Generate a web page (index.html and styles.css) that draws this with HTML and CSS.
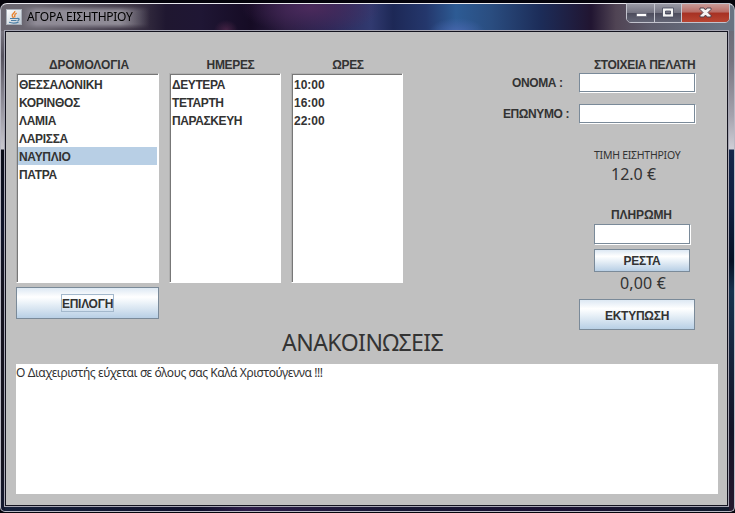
FILE: index.html
```
<!DOCTYPE html>
<html lang="el">
<head>
<meta charset="utf-8">
<title>ΑΓΟΡΑ ΕΙΣΗΤΗΡΙΟΥ</title>
<link rel="stylesheet" href="styles.css">
</head>
<body>
<div class="window">
  <header class="titlebar">
    <svg class="java" viewBox="0 0 16 16" width="16" height="16">
      <defs><linearGradient id="tile" x2="1" y2="1"><stop stop-color="#fff"/><stop offset="1" stop-color="#bdc8d2"/></linearGradient></defs>
      <rect x=".5" y=".5" width="15" height="15" fill="url(#tile)" stroke="#a9b0ba"/>
      <path d="M8.8 2C9.5 4 5 5 6.3 7.2L7.5 9M10.7 4.2C7.5 5.6 9.2 6.5 8.6 8.5" fill="none" stroke="#e8822e" stroke-width="1.4"/>
      <path d="M4 9.5h7.5M5 11.5h5.5M11 9.5c3-.5 2.5 2 .5 2.3M3 13.3c3 .9 7 .8 9.5-.2" fill="none" stroke="#4d7fa5" stroke-width="1.2"/>
    </svg>
    <span class="title">ΑΓΟΡΑ ΕΙΣΗΤΗΡΙΟΥ</span>
    <div class="controls">
      <span class="ctl min"><svg width="28" height="18"><rect x="9.500" y="9.500" width="10" height="3" fill="#fff" stroke="#555868" stroke-width=".6"/></svg></span>
      <span class="ctl max"><svg width="26" height="18"><path d="M7.500 4h11v9h-11zM10.500 7v3h5V7z" fill="#f4f4f4" fill-rule="evenodd" stroke="#44475a" stroke-width=".8"/></svg></span>
      <span class="ctl close"><svg width="46" height="18"><path d="M18 4h4l1.500 2L25 4h4v1.500L26 8.500 29 11.500V13h-4l-1.500-2L22 13h-4v-1.500L21 8.500 18 5.500z" fill="#f6f3f3" stroke="#51404c" stroke-width="1"/></svg></span>
    </div>
  </header>
  <main class="client">
    <div class="top">
      <section class="col routes">
        <h2>ΔΡΟΜΟΛΟΓΙΑ</h2>
        <ul class="list">
          <li>ΘΕΣΣΑΛΟΝΙΚΗ</li><li>ΚΟΡΙΝΘΟΣ</li><li>ΛΑΜΙΑ</li><li>ΛΑΡΙΣΣΑ</li><li class="selected">ΝΑΥΠΛΙΟ</li><li>ΠΑΤΡΑ</li>
        </ul>
        <button class="select"><span>ΕΠΙΛΟΓΗ</span></button>
      </section>
      <section class="col days">
        <h2>ΗΜΕΡΕΣ</h2>
        <ul class="list"><li>ΔΕΥΤΕΡΑ</li><li>ΤΕΤΑΡΤΗ</li><li>ΠΑΡΑΣΚΕΥΗ</li></ul>
      </section>
      <section class="col hours">
        <h2>ΩΡΕΣ</h2>
        <ul class="list nums"><li>10:00</li><li>16:00</li><li>22:00</li></ul>
      </section>
      <section class="customer">
        <h2>ΣΤΟΙΧΕΙΑ ΠΕΛΑΤΗ</h2>
        <div class="field first"><label>ΟΝΟΜΑ :</label><input type="text"></div>
        <div class="field second"><label>ΕΠΩΝΥΜΟ :</label><input type="text"></div>
        <p class="price-label">ΤΙΜΗ ΕΙΣΗΤΗΡΙΟΥ</p>
        <p class="price">12.0 €</p>
        <p class="pay-label">ΠΛΗΡΩΜΗ</p>
        <input class="pay" type="text">
        <button class="change">ΡΕΣΤΑ</button>
        <p class="rest">0,00 €</p>
        <button class="print">ΕΚΤΥΠΩΣΗ</button>
      </section>
    </div>
    <h1>ΑΝΑΚΟΙΝΩΣΕΙΣ</h1>
    <div class="news">Ο Διαχειριστής εύχεται σε όλους σας Καλά Χριστούγεννα !!!</div>
  </main>
</div>
</body>
</html>
```
FILE: styles.css
```
* { box-sizing: border-box; margin: 0; padding: 0; }
body { width: 735px; height: 513px; overflow: hidden; background: #05040c; padding-top: 3px; font-family: "Liberation Sans", sans-serif; color: #333; }
.window {
  width: 735px; height: 509px; padding: 0 4px 4px 3px; border: 1px solid #b9b9c4; border-top-color: #e9e9ef; border-radius: 7px 7px 5px 5px;
  background:
    linear-gradient(#77747f 0, #55525e 25px, #8d8b96 70px, #c9c8cf 118px, #0b0d18 119px, #10142a 200px, #15131f 260px, #15131f 430px, #101a38) 0 27px / 4px 100% no-repeat,
    linear-gradient(#6b6c78 0, #777480 30px, #a5a3ae 85px, #cfced6 118px, #14264a 119px, #101e40 175px, #061024 230px, #17324e 260px, #141226 400px, #26182e 480px) 100% 27px / 5px 100% no-repeat,
    linear-gradient(90deg, #15203a, #10102c 200px, #2c1c48 245px, #171734 400px, #1a1032 550px, #111a2c) 0 100% / 100% 5px no-repeat,
    radial-gradient(ellipse 12px 10px at 225px 26px, #64305690, transparent),
    radial-gradient(ellipse 28px 14px at 456px 28px, #4766ac, transparent),
    radial-gradient(ellipse 70px 26px at 310px 4px, #4b2a5c, transparent),
    linear-gradient(90deg, #6a6670 0, #6a6670 40px, #403848 130px, #1f1730 165px, #1f1634 200px, #150b24 250px, #2a1c40 285px, #2c2858 330px, #313a70 370px, #1d2856 392px, #24376c 425px, #2d5b94 455px, #2a4d80 490px, #1c2c58 540px, #211531 590px, #504454 615px, #5d5c6c 650px, #697382 720px) 0 0 / 100% 30px no-repeat,
    #151a2e;
}
.titlebar { display: flex; align-items: flex-start; height: 26px; padding-left: 2px; }
.java { flex: none; margin-top: 5px; }
.title {
  margin: 2px 0 0; padding: 1px 10px 0 5px; height: 23px; width: 134px; flex: none; white-space: nowrap;
  font: 12px/20px "Noto Sans", sans-serif; letter-spacing: -0.3px; color: #000;
  background: linear-gradient(90deg, #8f8b9600, #8f8b96 14px, #8f8b96 98px, #8f8b9600 128px);
  -webkit-mask: linear-gradient(transparent, #000 5px, #000 18px, transparent);
}
.controls { display: flex; margin: -1px 0 0 auto; height: 20px; border: 1px solid #c2c3cd; border-radius: 0 0 5px 5px; overflow: hidden; }
.ctl { height: 18px; border-right: 1px solid #c5c6cf; background: linear-gradient(#9999a5, #747482 48%, #4c4c5c 50%, #646676); }
.ctl svg { display: block; }
.min { width: 28px; }
.max { width: 27px; }
.close { width: 47px; border-right: 0; background: linear-gradient(#c99a98, #b96b64 45%, #a73123 50%, #b84532); }
.client { width: 725px; height: 477px; background: #c0c0c0; border: 1px solid #a5a5b2; box-shadow: inset 0 0 0 1px #13131f; padding: 27px 10px 10px 11px; }
.top { display: flex; height: 269px; }
h2 { font: bold 12px/14px "Liberation Sans", sans-serif; height: 15px; letter-spacing: -0.35px; white-space: nowrap; }
.col h2 { text-align: center; }
.routes { width: 143px; }
.routes .list { letter-spacing: -0.3px; }
.routes h2 { padding-left: 3px; letter-spacing: -0.1px; }
.days { width: 112px; margin-left: 10px; }
.days .list { letter-spacing: -0.4px; }
.days h2 { padding-left: 11px; }
.hours { width: 112px; margin-left: 10px; }
.hours h2 { padding-left: 2px; }
.list { list-style: none; height: 210px; background: #fff; border: 1px solid; border-color: #b0b0b0 #fff #fff #b0b0b0; box-shadow: inset 1px 1px #777; padding: 1px; }
.list li { height: 18px; padding-left: 1px; font: bold 12px/20px "Liberation Sans", sans-serif; white-space: nowrap; }
.list .selected { background: #b8cfe5; }
button { display: flex; align-items: center; justify-content: center; border: 1px solid #7a8a99; background: linear-gradient(#dde8f3, #fff 30%, #f5f9fc 40%, #b8cfe5); font: bold 12px/14px "Liberation Sans", sans-serif; letter-spacing: -0.25px; color: #333; }
.select { width: 143px; height: 32px; margin-top: 4px; }
.select span { height: 18px; line-height: 18px; border: 1px solid #a3b8cc; }
.customer { margin-left: auto; width: 218px; }
.customer h2 { padding-left: 94px; }
.field { display: flex; justify-content: space-between; width: 196px; }
.field label { font: bold 12px/21px "Liberation Sans", sans-serif; letter-spacing: -0.4px; height: 20px; white-space: nowrap; }
.first { padding-left: 12px; }
.second { margin-top: 11px; padding-left: 3px; }
input { display: block; width: 117px; height: 20px; background: #fff; border: 1px solid #7a8a99; border-right: 1px solid #fff; border-bottom: 1px solid #fff; box-shadow: inset -1px -1px #7a8a99; }
.price-label { margin: 24px 0 0 94px; font: 10.5px/14px "Noto Sans", sans-serif; letter-spacing: -0.25px; white-space: nowrap; }
.price { margin: 2px 0 0 111px; font: 16px/20px "Noto Sans", sans-serif; }
.pay-label { margin: 24px 0 0 111px; font: bold 12px/14px "Liberation Sans", sans-serif; letter-spacing: -0.1px; }
.pay { width: 97px; margin: 2px 0 0 94px; height: 21px; }
.change { width: 96px; height: 23px; margin: 4px 0 0 94px; }
.rest { margin: 1px 0 0 120px; font: 16px/20px "Noto Sans", sans-serif; letter-spacing: 0.15px; }
.print { width: 116px; height: 31px; margin: 6px 0 0 79px; padding-top: 2px; }
h1 { height: 37px; padding: 0 0 0 266px; font: 23px/30px "Noto Sans", sans-serif; letter-spacing: -0.5px; white-space: nowrap; }
.news { height: 130px; width: 702px; background: #fff; font: 12px/18px "Noto Sans", sans-serif; letter-spacing: -0.42px; white-space: nowrap; }
```
